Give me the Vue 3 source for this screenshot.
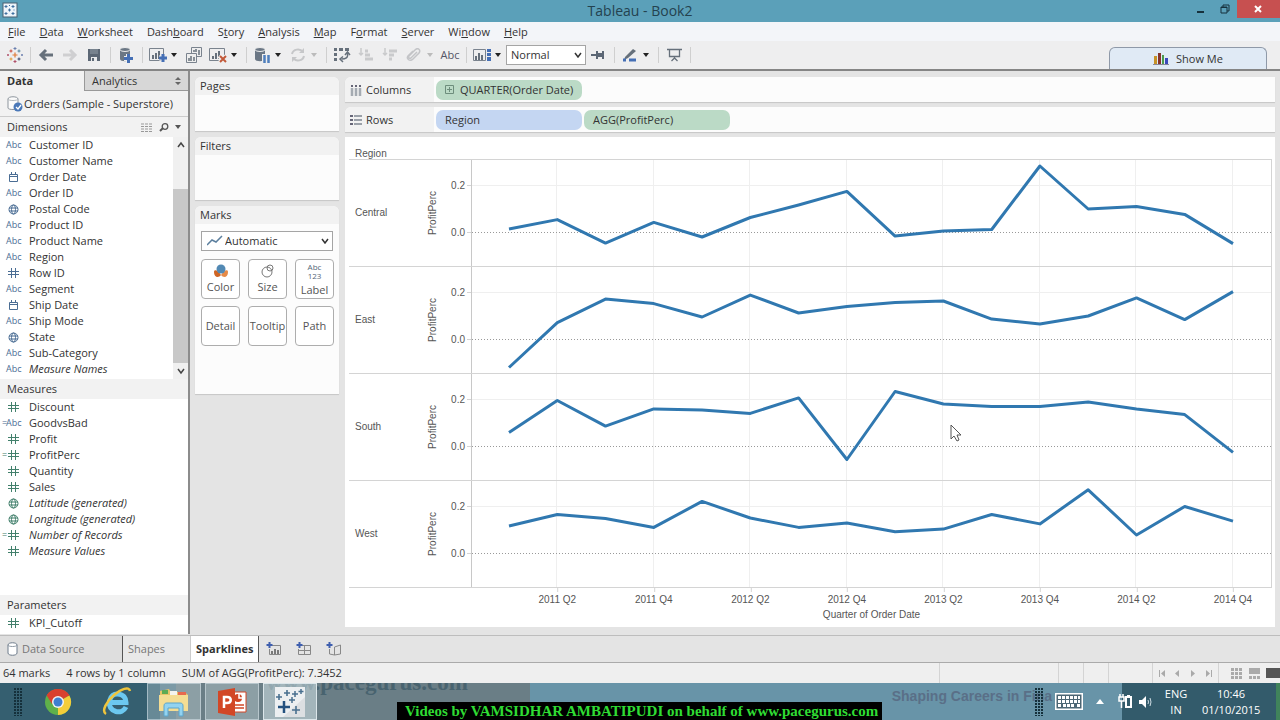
<script setup>
import { ref } from 'vue'

const menus = [
  ['', 'F', 'ile'], ['', 'D', 'ata'], ['', 'W', 'orksheet'], ['Dash', 'b', 'oard'],
  ['S', 't', 'ory'], ['', 'A', 'nalysis'], ['', 'M', 'ap'], ['F', 'o', 'rmat'],
  ['', 'S', 'erver'], ['Wi', 'n', 'dow'], ['', 'H', 'elp']
]

const dimensions = [
  { name: 'Customer ID', type: 'abc' },
  { name: 'Customer Name', type: 'abc' },
  { name: 'Order Date', type: 'date' },
  { name: 'Order ID', type: 'abc' },
  { name: 'Postal Code', type: 'geo' },
  { name: 'Product ID', type: 'abc' },
  { name: 'Product Name', type: 'abc' },
  { name: 'Region', type: 'abc' },
  { name: 'Row ID', type: 'num' },
  { name: 'Segment', type: 'abc' },
  { name: 'Ship Date', type: 'date' },
  { name: 'Ship Mode', type: 'abc' },
  { name: 'State', type: 'geo' },
  { name: 'Sub-Category', type: 'abc' },
  { name: 'Measure Names', type: 'abc', generated: true }
]

const measures = [
  { name: 'Discount', type: 'num' },
  { name: 'GoodvsBad', type: 'abc', calc: true, blue: true },
  { name: 'Profit', type: 'num' },
  { name: 'ProfitPerc', type: 'num', calc: true },
  { name: 'Quantity', type: 'num' },
  { name: 'Sales', type: 'num' },
  { name: 'Latitude (generated)', type: 'geo', generated: true },
  { name: 'Longitude (generated)', type: 'geo', generated: true },
  { name: 'Number of Records', type: 'num', calc: true, generated: true },
  { name: 'Measure Values', type: 'num', generated: true }
]

const parameters = [{ name: 'KPI_Cutoff', type: 'num' }]

const sections = [
  { key: 'dimensions', title: 'Dimensions', fields: dimensions },
  { key: 'measures', title: 'Measures', fields: measures },
  { key: 'parameters', title: 'Parameters', fields: parameters }
]

const regions = [
  { name: 'Central', values: [0.017, 0.057, -0.043, 0.045, -0.017, 0.066, 0.119, 0.177, -0.013, 0.009, 0.015, 0.285, 0.102, 0.113, 0.079, -0.045] },
  { name: 'East', values: [-0.117, 0.074, 0.174, 0.155, 0.098, 0.191, 0.115, 0.143, 0.16, 0.166, 0.089, 0.068, 0.102, 0.179, 0.087, 0.206] },
  { name: 'South', values: [0.062, 0.198, 0.089, 0.162, 0.157, 0.143, 0.209, -0.053, 0.236, 0.183, 0.172, 0.172, 0.191, 0.162, 0.138, -0.023] },
  { name: 'West', values: [0.119, 0.168, 0.151, 0.113, 0.224, 0.153, 0.113, 0.132, 0.095, 0.106, 0.168, 0.128, 0.273, 0.081, 0.202, 0.14] }
]

const PANE_W = 799
const PANE_H = 106
const xAt = i => 37 + i * (724 / 15)
const yAt = v => 73 - v * 235
const line = values => values.map((v, i) => `${xAt(i).toFixed(1)},${yAt(v).toFixed(1)}`).join(' ')
const topOf = v => ({ top: `${(yAt(v) / PANE_H) * 100}%` })
const leftOf = i => ({ left: `${(xAt(i) / PANE_W) * 100}%` })

const quarters = Array.from({ length: 16 }, (_, i) => `${2011 + Math.floor(i / 4)} Q${(i % 4) + 1}`)
const shown = [1, 3, 5, 7, 9, 11, 13, 15]

const fit = ref('Normal')
const mark = ref('Automatic')
</script>

<template>
  <div class="screen">
    <header class="titlebar">
      <svg class="appicon" width="16" height="16" viewBox="0 0 16 16">
        <rect x="1" y="1" width="14" height="14" fill="#eef4fa" stroke="#4a6072" />
        <path d="M4 3v3M2.500 4.500h3M11 3v3M9.500 4.500h3M7.500 6.500v3M6 8h3M4 10v3M2.500 11.500h3M11 10v3M9.500 11.500h3M12 7.500v1M7.500 3v1" stroke="#3f6f9f" fill="none" />
      </svg>
      <h1>Tableau - Book2</h1>
      <div class="winbtns">
        <button aria-label="Minimize"><svg width="10" height="10"><path d="M1 8h7" stroke="#16313c" stroke-width="2" /></svg></button>
        <button aria-label="Restore"><svg width="11" height="10"><path d="M1 3h6v6H1zM3 3V1h6v6H7" fill="none" stroke="#16313c" /><path d="M1 3.500h6" stroke="#16313c" /></svg></button>
        <button class="close" aria-label="Close"><svg width="9" height="8"><path d="M1 1l6 6M7 1L1 7" stroke="#fff" stroke-width="2" /></svg></button>
      </div>
    </header>

    <nav class="menubar">
      <button v-for="m in menus" :key="m.join('')">{{ m[0] }}<u>{{ m[1] }}</u>{{ m[2] }}</button>
    </nav>

    <div class="toolbar">
      <button class="tool logo" aria-label="Start page">
        <svg width="16" height="16" viewBox="0 0 16 16" fill="none">
          <path d="M8 5.500v5M5.500 8h5" stroke="#e07a35" stroke-width="1.200" />
          <path d="M4 2.500v3M2.500 4h3" stroke="#c8493a" /><path d="M12 2.500v3M10.500 4h3" stroke="#59879b" />
          <path d="M4 10.500v3M2.500 12h3" stroke="#e09a35" /><path d="M12 10.500v3M10.500 12h3" stroke="#39476b" />
          <path d="M8 0v3M6.500 1.500h3M15 7v2M14 8h2" stroke="#6a7fae" /><path d="M8 13v3M6.500 14.500h3M1 7v2M0 8h2" stroke="#b0506a" />
        </svg>
      </button>
      <i class="sep"></i>
      <button class="tool" aria-label="Undo"><svg width="16" height="14" fill="none" stroke="#66707b" stroke-width="3"><path d="M3 7h12M8 2L3 7l5 5" /></svg></button>
      <button class="tool" aria-label="Redo"><svg width="16" height="14" fill="none" stroke="#cfcfd1" stroke-width="3"><path d="M1 7h12M8 2l5 5-5 5" /></svg></button>
      <button class="tool" aria-label="Save"><svg width="14" height="14"><path d="M1 1h12v12H1z" fill="#5c6775" /><path d="M3 1h8v5H3z" fill="#77828e" /><path d="M4 9h6v4H4z" fill="#e9eaec" /><path d="M5 10h2v3H5z" fill="#5c6775" /></svg></button>
      <i class="sep"></i>
      <button class="tool" aria-label="New data source"><svg width="16" height="18"><path d="M2 4v9c0 3 10 3 10 0V4z" fill="#6b7785" /><ellipse cx="7" cy="3.500" rx="5" ry="2" fill="#6b7785" stroke="#eee" /><path d="M10.500 8v9M6 12.500h9" stroke="#eee" stroke-width="5" /><path d="M10.500 8v9M6 12.500h9" stroke="#456fb5" stroke-width="3" /></svg></button>
      <i class="sep"></i>
      <button class="tool" aria-label="New worksheet"><svg width="20" height="16"><path d="M1.500 1.500h14v12h-14z" fill="none" stroke="#7a838e" /><path d="M5 12V8M8 12V6M11 12V4" stroke="#66707b" stroke-width="2" /><path d="M15 7v8M11 11h8" stroke="#eee" stroke-width="5" /><path d="M15 7v8M11 11h8" stroke="#456fb5" stroke-width="3" /></svg></button>
      <button class="caret" aria-label="New worksheet options"><svg width="6" height="4"><path d="M0 0h6L3 4z" fill="#222" /></svg></button>
      <button class="tool" aria-label="Duplicate"><svg width="18" height="18" fill="none" stroke="#7a838e"><path d="M6.500 1.500h10v9h-10z" /><path d="M1.500 7.500h10v9h-10z" fill="#eee" /><path d="M9 6V4M11 6V3M14 9V4M4 15v-3M6 15v-5M9 15v-4" stroke="#66707b" stroke-width="1.500" /></svg></button>
      <button class="tool" aria-label="Clear sheet"><svg width="20" height="18"><path d="M1.500 2.500h15v12h-15z" fill="none" stroke="#7a838e" /><path d="M5 13v-3M8 13V7M11 13V5" stroke="#66707b" stroke-width="2" /><path d="M11 10l7 7M18 10l-7 7" stroke="#eee" stroke-width="4" /><path d="M12 10l6 6M18 10l-6 6" stroke="#c2593a" stroke-width="2" /></svg></button>
      <button class="caret" aria-label="Clear options"><svg width="6" height="4"><path d="M0 0h6L3 4z" fill="#222" /></svg></button>
      <i class="sep"></i>
      <button class="tool" aria-label="Pause updates"><svg width="18" height="18"><path d="M2 4v9c0 3 10 3 10 0V4z" fill="#6b7785" /><ellipse cx="7" cy="3.500" rx="5" ry="2" fill="#6b7785" stroke="#eee" /><path d="M9 8h8v10H9z" fill="#eee" /><path d="M11.500 9v8M15.500 9v8" stroke="#4f7fbd" stroke-width="2.500" /></svg></button>
      <button class="caret" aria-label="Pause options"><svg width="6" height="4"><path d="M0 0h6L3 4z" fill="#222" /></svg></button>
      <button class="tool" aria-label="Run update"><svg width="16" height="14" fill="none" stroke="#c6c7c9" stroke-width="2"><path d="M2 6c1-5 8-6 11-2M14 8c-1 5-8 6-11 2" /><path d="M14 0v5H9zM2 14V9h5z" fill="#c6c7c9" stroke="none" /></svg></button>
      <button class="caret" aria-label="Update options"><svg width="6" height="4"><path d="M0 0h6L3 4z" fill="#bbb" /></svg></button>
      <i class="sep"></i>
      <button class="tool" aria-label="Swap rows and columns"><svg width="18" height="16" fill="none" stroke="#66707b"><path d="M1 2.500h3M6 2.500h4M12 2.500h4M2.500 6v3M2.500 11v3" stroke-width="3" /><path d="M14.500 6c1 5-2 6-6 6" stroke-width="1.500" /><path d="M12 8l2.500-3 2.500 3M10 9.500L7 12l3 3" stroke-width="1.500" /></svg></button>
      <button class="tool" aria-label="Sort ascending"><svg width="16" height="14" stroke="#c9cacc" fill="none"><path d="M3 0v7M1 5l2 2 2-2" stroke-width="1.500" /><path d="M7 3h3M7 7h5M7 11h8" stroke-width="3" /></svg></button>
      <button class="tool" aria-label="Sort descending"><svg width="16" height="14" stroke="#c9cacc" fill="none"><path d="M3 0v7M1 5l2 2 2-2" stroke-width="1.500" /><path d="M7 3h8M7 7h5M7 11h3" stroke-width="3" /></svg></button>
      <button class="tool" aria-label="Group"><svg width="16" height="14" stroke="#c3c4c7" fill="none" stroke-width="1.500"><path d="M11 4L5 10c-2 1-3-1-2-2l6-6c3-3 6 0 4 3l-6 6c-3 3-7 0-5-3l5-5" /></svg></button>
      <button class="caret" aria-label="Group options"><svg width="6" height="4"><path d="M0 0h6L3 4z" fill="#bbb" /></svg></button>
      <button class="tool abc" aria-label="Show mark labels">Abc</button>
      <i class="sep"></i>
      <button class="tool" aria-label="Show cards"><svg width="20" height="14"><path d="M1.500 1.500h12v11h-12z" fill="none" stroke="#7a838e" /><path d="M4 12V8M7 12V5M10 12V7" stroke="#66707b" stroke-width="2" /><path d="M15 1h4v3h-4zM15 5h4v3h-4zM15 9h4v4h-4z" fill="#456fb5" /></svg></button>
      <button class="caret" aria-label="Card options"><svg width="6" height="4"><path d="M0 0h6L3 4z" fill="#222" /></svg></button>
      <div class="combo fit">
        <select v-model="fit" aria-label="Fit"><option>Normal</option></select>
        <svg width="8" height="6" fill="none" stroke="#333" stroke-width="1.500"><path d="M1 1l3 4 3-4" /></svg>
      </div>
      <button class="tool" aria-label="Fix axes"><svg width="16" height="12" fill="#5c6775"><path d="M1 5h5v2H1zM6 2h2v8H6zM8 4h4v4H8zM12 2h2v8h-2z" /></svg></button>
      <i class="sep"></i>
      <button class="tool" aria-label="Highlight"><svg width="16" height="14"><path d="M3 9l8-8 3 2-8 7-4 2z" fill="#66707b" /><path d="M7 12h7M1 12h3" stroke="#456fb5" stroke-width="3" /></svg></button>
      <button class="caret" aria-label="Highlight options"><svg width="6" height="4"><path d="M0 0h6L3 4z" fill="#222" /></svg></button>
      <i class="sep"></i>
      <button class="tool" aria-label="Presentation mode"><svg width="15" height="14" fill="none" stroke="#66707b"><path d="M0 1.500h15M2.500 2v6.500h10V2M7.500 9v2M7.500 10l-3 3M7.500 10l3 3" stroke-width="1.300" /></svg></button>
      <i class="sep"></i>
      <button class="showme">
        <svg width="16" height="12"><path d="M1 3h3v8H1z" fill="#c79328" /><path d="M5 0h3v11H5z" fill="#85332c" /><path d="M9 2h2v9H9z" fill="#4b9b4c" /><path d="M12 5h3v6h-3z" fill="#3b49bb" /><path d="M0 11.500h16" stroke="#889" /></svg>
        Show Me
      </button>
    </div>

    <div class="workspace">
      <aside class="side">
        <div class="sidetabs">
          <button class="active">Data</button>
          <button class="off">Analytics
            <svg width="6" height="8" fill="#666"><path d="M0 3h6L3 0zM0 5h6L3 8z" /></svg>
          </button>
        </div>
        <div class="source">
          <svg width="16" height="16" viewBox="0 0 16 16"><path d="M1 3c0-3 10-3 10 0v9c0 2-10 2-10 0z" fill="#fbfbfb" stroke="#8d959d" /><path d="M1 3c0 2 10 2 10 0" fill="none" stroke="#b5babf" /><circle cx="11" cy="11" r="4.500" fill="#4a78b8" /><path d="M9 11l2 2 3-4" fill="none" stroke="#fff" stroke-width="1.300" /></svg>
          Orders (Sample - Superstore)
        </div>
        <section v-for="s in sections" :key="s.key" :class="['fields', s.key]">
          <h2>
            {{ s.title }}
            <span v-if="s.key === 'dimensions'" class="tools">
              <svg width="12" height="9" stroke="#999" stroke-dasharray="3 1"><path d="M0 1h12M0 3.500h12M0 6h12M0 8.500h12" /></svg>
              <svg width="10" height="9" fill="none" stroke="#555"><circle cx="6" cy="3.500" r="2.800" stroke-width="1.300" /><path d="M4 5L1 8" stroke-width="2" /></svg>
              <svg width="6" height="4"><path d="M0 0h6L3 4z" fill="#555" /></svg>
            </span>
          </h2>
          <div class="listwrap">
            <ul>
              <li v-for="f in s.fields" :key="f.name" :class="{ generated: f.generated }">
                <span :class="['ficon', s.key === 'dimensions' || f.blue ? 'blue' : 'green']">
                  <b v-if="f.calc">=</b>
                  <span v-if="f.type === 'abc'">Abc</span>
                  <svg v-else-if="f.type === 'num'" width="14" height="10" fill="none" stroke="currentColor"><path d="M5.500 0v10M9.500 0v10M2 3.500h11M2 6.500h11" /></svg>
                  <svg v-else-if="f.type === 'date'" width="14" height="11" fill="none" stroke="currentColor"><path d="M3.500 2.500h8v7h-8zM3 4.500h9M5.500 0v3M9.500 0v3" /></svg>
                  <svg v-else width="14" height="11" fill="none" stroke="currentColor"><circle cx="7.500" cy="5.500" r="4.500" /><ellipse cx="7.500" cy="5.500" rx="2" ry="4.500" /><path d="M3 4h9M3 7h9" /></svg>
                </span>
                {{ f.name }}
              </li>
            </ul>
            <div v-if="s.key === 'dimensions'" class="scroll">
              <svg width="8" height="16" fill="none" stroke="#444" stroke-width="1.500"><path d="M1 10l3-4 3 4" /></svg>
              <i class="thumb"></i>
              <svg width="8" height="16" fill="none" stroke="#444" stroke-width="1.500"><path d="M1 6l3 4 3-4" /></svg>
            </div>
          </div>
        </section>
      </aside>

      <div class="cards">
        <section class="card pages"><h3>Pages</h3></section>
        <section class="card filters"><h3>Filters</h3></section>
        <section class="card marks">
          <h3>Marks</h3>
          <div class="combo marktype">
            <svg class="lead" width="16" height="12" fill="none" stroke="#5b7f9e" stroke-width="1.500"><path d="M0 10l5-5 4 2 6-6" /></svg>
            <select v-model="mark" aria-label="Mark type"><option>Automatic</option></select>
            <svg width="8" height="6" fill="none" stroke="#333" stroke-width="1.500"><path d="M1 1l3 4 3-4" /></svg>
          </div>
          <div class="markgrid">
            <button><svg width="16" height="14"><path d="M1 8c0-3 4-2 7 3-2 3-7 3-7-3z" fill="#cf6524" /><path d="M15 8c0-3-4-2-7 3 2 3 7 3 7-3z" fill="#e58a48" /><circle cx="8" cy="5" r="4.500" fill="#5289b4" /></svg>Color</button>
            <button><svg width="14" height="14" fill="none" stroke="#777"><circle cx="6" cy="8" r="5" /><circle cx="9" cy="4" r="3" /></svg>Size</button>
            <button class="lbl"><span class="abc123">Abc<br>123</span>Label</button>
            <button>Detail</button>
            <button>Tooltip</button>
            <button>Path</button>
          </div>
        </section>
      </div>

      <main class="main">
        <div class="shelf">
          <div class="shelfname">
            <svg width="12" height="12"><path d="M1 1h2v2H1zM5 1h2v2H5zM9 1h2v2H9z" fill="#667" /><path d="M2 4v8M6 4v8M10 4v8" stroke="#a5abb2" stroke-width="2.500" /></svg>
            Columns
          </div>
          <button class="pill green">
            <svg width="9" height="9" fill="none" stroke="#6d8d7c"><path d="M.5.500h8v8h-8zM2 4.500h5M4.500 2v5" /></svg>
            QUARTER(Order Date)
          </button>
        </div>
        <div class="shelf">
          <div class="shelfname">
            <svg width="12" height="12"><path d="M0 1h3v2H0zM0 5h3v2H0zM0 9h3v2H0z" fill="#667" /><path d="M4 2h8M4 6h8M4 10h8" stroke="#9aa0a8" stroke-width="2" /></svg>
            Rows
          </div>
          <button class="pill blue">Region</button>
          <button class="pill green">AGG(ProfitPerc)</button>
        </div>

        <div class="sheet">
          <div class="colhead">Region</div>
          <div v-for="r in regions" :key="r.name" class="pane">
            <div class="rowlabel">{{ r.name }}</div>
            <div class="axistitle"><span>ProfitPerc</span></div>
            <div class="yaxis">
              <span class="tick" :style="topOf(0.2)">0.2</span>
              <span class="tick" :style="topOf(0)">0.0</span>
            </div>
            <svg class="plot" :viewBox="`0 0 ${PANE_W} ${PANE_H}`" preserveAspectRatio="none" role="img" :aria-label="`${r.name} profit by quarter`">
              <g class="grid">
                <path v-for="i in shown" :key="i" :d="`M${Math.round(xAt(i)) - 0.5} 0V${PANE_H}`" />
                <path :d="`M0 ${yAt(0.2) - 0.5}H${PANE_W}`" />
              </g>
              <path class="zero" :d="`M0 ${yAt(0) - 0.5}H${PANE_W}`" />
              <polyline class="series" :points="line(r.values)" />
            </svg>
          </div>
          <div class="xaxis">
            <div class="xlabels">
              <span v-for="i in shown" :key="i" class="xtick" :style="leftOf(i)">{{ quarters[i] }}</span>
            </div>
            <div class="xtitle">Quarter of Order Date</div>
          </div>
          <svg class="pointer" width="12" height="18"><path d="M1 1v14l3-3 3 5 2-1-2-5h4z" fill="#fff" stroke="#555" /></svg>
        </div>
      </main>
    </div>

    <div class="tabs">
      <button class="tab ds">
        <svg width="11" height="14"><path d="M1 3c0-3 9-3 9 0v8c0 3-9 3-9 0z" fill="#fff" stroke="#6f7d8c" /><path d="M1 3c0 2 9 2 9 0" fill="none" stroke="#8f9aa5" /></svg>
        Data Source
      </button>
      <button class="tab shapes">Shapes</button>
      <button class="tab current">Sparklines</button>
      <button class="add" aria-label="New worksheet"><svg width="16" height="14" fill="none"><path d="M5 3.500h9.500v9H3.500V7" stroke="#888" /><path d="M6 12V9M9 12V7M12 12V8" stroke="#555" stroke-width="1.500" /><path d="M3.500 0v6M.500 3h6" stroke="#3f5fae" stroke-width="2" /></svg></button>
      <button class="add" aria-label="New dashboard"><svg width="16" height="14" fill="none"><path d="M5 3.500h9.500v9H2.500V7M3 8.500h11M8.500 4v8" stroke="#888" /><path d="M3.500 0v6M.500 3h6" stroke="#3f5fae" stroke-width="2" /></svg></button>
      <button class="add" aria-label="New story"><svg width="16" height="14" fill="none"><path d="M8.500 5l6-2v9l-6 1-5-1V7M8.500 5v8" stroke="#888" /><path d="M3.500 0v6M.500 3h6" stroke="#3f5fae" stroke-width="2" /></svg></button>
    </div>

    <div class="status">
      <span>64 marks</span><span>4 rows by 1 column</span><span>SUM of AGG(ProfitPerc): 7.3452</span>
      <div class="cells">
        <i class="c1"></i><i class="c2"></i><i class="c2"></i><i class="c3"></i>
        <div class="nav">
          <button aria-label="First"><svg width="7" height="7" fill="#aaa"><path d="M0 0h1v7H0zM6 0v7L2 3.500z" /></svg></button>
          <button aria-label="Previous"><svg width="7" height="7" fill="#aaa"><path d="M5 0v7L1 3.500z" /></svg></button>
          <button aria-label="Next"><svg width="7" height="7" fill="#aaa"><path d="M1 0v7l4-3.500z" /></svg></button>
          <button aria-label="Last"><svg width="7" height="7" fill="#aaa"><path d="M1 0v7l4-3.500zM6 0h1v7H6z" /></svg></button>
        </div>
        <div class="views">
          <button aria-label="Sheet sorter"><svg width="11" height="11" fill="#aaa"><path d="M0 0h3v3H0zM4 0h3v3H4zM8 0h3v3H8zM0 4h3v3H0zM4 4h3v3H4zM8 4h3v3H8zM0 8h3v3H0zM4 8h3v3H4zM8 8h3v3H8z" /></svg></button>
          <button aria-label="Filmstrip"><svg width="11" height="11" fill="#aaa"><path d="M0 0h11v6H0zM0 8h3v3H0zM4 8h3v3H4zM8 8h3v3H8z" /></svg></button>
          <button class="dark" aria-label="Tabs view"></button>
        </div>
      </div>
    </div>

    <footer class="taskbar">
      <div class="back">
        <span class="site">www.pacegurus.com</span>
        <span class="slogan">Shaping Careers in Fina</span>
      </div>
      <i class="dots first"></i>
      <button class="app chrome" aria-label="Chrome">
        <svg width="28" height="28" viewBox="0 0 28 28"><circle cx="14" cy="14" r="13" fill="#5fb04a" /><path d="M14 14L2.700 7.500A13 13 0 0 1 25.300 7.500z" fill="#d9402f" /><path d="M14 14l11.300-6.500A13 13 0 0 1 14 27z" fill="#f3cd3a" /><path d="M14 8h11.500l-.2-.5A13 13 0 0 0 2.700 7.500L8 16z" fill="#d9402f" /><circle cx="14" cy="14" r="6" fill="#f2f2f2" /><circle cx="14" cy="14" r="4.500" fill="#3f7fd0" /></svg>
      </button>
      <button class="app ie" aria-label="Internet Explorer">
        <svg width="30" height="30" viewBox="0 0 30 30" fill="none"><path d="M24 20c-2 4-6 5.500-10 4.500C9 23 6.500 19 7.500 14 8.500 9 12 6.500 16 7c5.500.5 8 4 8 8.500H9" stroke="#6cc8f0" stroke-width="5" /><path d="M4 27c-5-3 1-13 8-19S27-1 28 4" stroke="#f0c53c" stroke-width="2.500" /></svg>
      </button>
      <button class="app open explorer" aria-label="File Explorer">
        <svg width="32" height="30" viewBox="0 0 32 30"><path d="M2 4l9-2 2 3h14l3 3v16H2z" fill="#e6c469" /><path d="M4 3h6v4H4z" fill="#5cab55" /><path d="M12 4h7v4h-7z" fill="#f4f4ee" /><path d="M20 5h8v4h-8z" fill="#e7694f" /><path d="M1 8h29v16H1z" fill="#f4dd93" /><path d="M6 29V19c0-2 1-3 3-3h13c2 0 3 1 3 3v10h-4v-8H10v8z" fill="#93d3f0" stroke="#5ba5cc" /></svg>
      </button>
      <button class="app open ppt" aria-label="PowerPoint">
        <svg width="30" height="28" viewBox="0 0 30 28"><path d="M15 4h14v20H15z" fill="#fff" stroke="#d24726" /><circle cx="21" cy="10" r="4" fill="#d24726" /><path d="M22 6v4h4" stroke="#fff" fill="none" stroke-width="1.500" /><path d="M18 17h9M18 20h9" stroke="#d24726" stroke-width="1.500" /><path d="M1 3l17-3v28L1 25z" fill="#d24726" /><path d="M7 20V9h3c5 0 5 6 0 6H8" fill="none" stroke="#fff" stroke-width="2.500" /></svg>
      </button>
      <button class="app open tableau" aria-label="Tableau">
        <svg width="30" height="30" viewBox="0 0 30 30" fill="none"><path d="M0 0h30v30H0z" fill="#eceff1" /><path d="M30 10v20H8z" fill="#dcdfe2" /><path d="M9 14v12M3 20h12" stroke="#24517f" stroke-width="2.500" /><path d="M4 7v6M1 10h6M12 3v6M9 6h6M21 19v8M17 23h8" stroke="#49708f" stroke-width="1.600" /><path d="M17 10v6M14 13h6M20 4v6M17 7h6M26 2v5M23.500 4.500h5" stroke="#49708f" stroke-width="1.500" /></svg>
      </button>
      <div class="tray">
        <i class="dots"></i>
        <svg class="kbd" width="28" height="17"><path d="M.5.500h27v16H.5z" fill="#4c6674" stroke="#fff" stroke-width="2" /><path d="M3 4.500h22M3 8.500h22M3 12.500h3M8 12.500h12M22 12.500h3" stroke="#fff" stroke-width="3" stroke-dasharray="3 1" /></svg>
        <svg class="up" width="8" height="5"><path d="M0 5h8L4 0z" fill="#fff" /></svg>
        <svg class="power" width="14" height="15" fill="none" stroke="#fff"><path d="M1 3h5v4H1zM2 0v3M5 0v3M3.500 7v7" stroke-width="1.500" /><path d="M8 3h5v10H8zM9 2h3" stroke-width="2" /></svg>
        <svg class="vol" width="15" height="14"><path d="M1 5h3l4-4v12L4 9H1z" fill="#fff" /><path d="M10 5q1 2 0 4M12 3q2 4 0 8" fill="none" stroke="#cfdde3" /></svg>
        <span class="lang">ENG<br>IN</span>
        <span class="clock">10:46<br>01/10/2015</span>
      </div>
      <div class="caption">Videos by VAMSIDHAR AMBATIPUDI on behalf of www.pacegurus.com</div>
    </footer>
  </div>
</template>

<style>
body { margin: 0; }
</style>

<style scoped>
* { box-sizing: border-box; }
.screen { display: flex; flex-direction: column; min-height: 100vh; background: #e4e4e4; color: #333; font: 11px/16px "Open Sans", "Noto Sans", sans-serif; overflow: hidden; }
button { font: inherit; color: inherit; background: none; border: 0; padding: 0; margin: 0; display: flex; align-items: center; white-space: nowrap; }
svg { display: block; flex: none; }
h1, h2, h3, ul { margin: 0; padding: 0; font: inherit; list-style: none; }

.titlebar { height: 22px; background: #5ba0b9; display: flex; align-items: center; justify-content: center; position: relative; }
.titlebar h1 { font-size: 14px; color: #24424f; }
.appicon { position: absolute; left: 2px; top: 2px; }
.winbtns { position: absolute; right: 0; top: 0; height: 18px; display: flex; }
.winbtns button { width: 24px; justify-content: center; }
.winbtns .close { width: 43px; background: #c75050; }

.menubar { height: 19px; background: #f3f5f9; display: flex; gap: 14px; padding: 0 8px; }
.menubar u { text-underline-offset: 1px; }

.toolbar { height: 30px; background: #eeeeef; border-bottom: 2px solid #858585; display: flex; align-items: center; padding-left: 4px; }
.tool { width: 24px; height: 26px; justify-content: center; }
.tool.logo { width: 22px; }
.tool.abc { color: #556; }
.caret { width: 12px; height: 26px; padding-left: 1px; }
.sep { width: 8px; height: 16px; background: linear-gradient(#cfcfcf, #cfcfcf) center / 1px 100% no-repeat; }
.combo { position: relative; display: flex; align-items: center; }
.combo select { appearance: none; width: 100%; height: 20px; background: #fff; border: 1px solid #a5a5a5; border-radius: 0; font: inherit; color: #333; padding: 0 4px; }
.combo svg { position: absolute; right: 4px; pointer-events: none; }
.combo .lead { left: 6px; right: auto; }
.fit { width: 80px; }
.showme { margin: 0 13px 0 auto; align-self: flex-end; width: 158px; height: 22px; justify-content: center; gap: 7px; background: #e0eaf5; border: 1px solid #8f99a8; border-bottom: 0; border-radius: 6px 6px 0 0; }

.workspace { flex: 1; display: flex; border-bottom: 1px solid #bdbdbd; }
.side { width: 190px; background: #fff; border-right: 2px solid #8c8c8c; margin-bottom: 1px; display: flex; flex-direction: column; }
.sidetabs { display: flex; height: 20px; }
.sidetabs .active { width: 84px; padding-left: 7px; background: #f2f2f2; font-weight: 700; }
.sidetabs .off { flex: 1; padding: 0 7px; justify-content: space-between; background: #d7d7d7; border-left: 1px solid #999; border-bottom: 1px solid #999; }
.source { height: 26px; background: #f2f2f2; border-bottom: 1px solid #ccc; display: flex; align-items: center; gap: 1px; padding-left: 7px; white-space: nowrap; }
.fields h2 { height: 20px; background: #f2f2f2; padding: 2px 7px; display: flex; justify-content: space-between; align-items: center; }
.tools { display: flex; align-items: center; gap: 6px; }
.measures { flex: 1; }
.measures .listwrap { padding-bottom: 4px; }
.parameters .listwrap { padding-bottom: 3px; }
.listwrap { display: flex; }
.listwrap ul { flex: 1; }
.dimensions ul { padding-bottom: 2px; }
li { height: 16px; display: flex; align-items: center; white-space: nowrap; }
.generated { font-style: italic; }
.ficon { position: relative; width: 29px; padding-left: 6px; display: flex; align-items: center; font-size: 9px; font-style: normal; line-height: 12px; }
.ficon.blue { color: #4a6d94; }
.ficon.green { color: #42806c; }
.ficon b { position: absolute; left: 2px; font-weight: 400; }
.scroll { width: 15px; background: #f0f0f0; display: flex; flex-direction: column; align-items: center; }
.thumb { width: 100%; flex: 1; margin-top: 36px; background: #c8c8c8; }

.cards { width: 155px; padding: 6px 6px 0 5px; display: flex; flex-direction: column; gap: 6px; }
.card { background: #fcfcfc; border-radius: 6px 6px 0 0; box-shadow: 0 1px 1px #c6c6c6; }
.card h3 { height: 18px; background: #f2f2f2; border-radius: 6px 6px 0 0; padding: 1px 5px; }
.pages { height: 54px; }
.filters { height: 63px; }
.marks { height: 188px; }
.marktype { margin: 7px 6px 8px; }
.marktype select { padding-left: 23px; }
.markgrid { display: grid; grid-template-columns: repeat(3, 1fr); gap: 7px 8px; padding: 0 5px 0 6px; }
.markgrid button { height: 40px; flex-direction: column; justify-content: center; gap: 1px; border: 1px solid #adadad; border-radius: 4px; background: #fff; color: #555; }
.markgrid .lbl { gap: 3px; line-height: 14px; }
.abc123 { font-size: 8px; line-height: 9px; color: #567; }

.main { flex: 1; min-width: 0; display: flex; flex-direction: column; padding: 6px 5px 8px 0; }
.shelf { height: 25px; margin-bottom: 5px; background: #fcfcfc; box-shadow: 0 1px 1px #c6c6c6; display: flex; align-items: center; gap: 2px; border-radius: 6px 0 0 0; }
.shelfname { width: 89px; height: 100%; background: #f2f2f2; display: flex; align-items: center; gap: 4px; padding-left: 5px; border-radius: 6px 0 0 0; }
.pill { width: 146px; height: 20px; border-radius: 7px; padding: 0 9px; gap: 6px; }
.pill.green { background: #bbdac6; }
.pill.blue { background: #c4d6f2; }

.sheet { position: relative; flex: 1; display: flex; flex-direction: column; background: #fff; padding: 0 3px 0 4px; color: #555; font: 10px/14px "Liberation Sans", Arial, sans-serif; }
.colhead { height: 23px; padding: 10px 6px 0; border-bottom: 1px solid #d4d4d4; line-height: 13px; }
.pane { flex: 1; min-height: 106px; display: flex; border-bottom: 1px solid #d4d4d4; border-right: 1px solid #d4d4d4; }
.rowlabel { width: 77px; padding-left: 6px; display: flex; align-items: center; }
.axistitle { width: 14px; display: flex; align-items: center; }
.axistitle span { writing-mode: vertical-rl; rotate: 180deg; }
.yaxis { width: 32px; position: relative; border-right: 1px solid #c8c8c8; }
.tick { position: absolute; right: 6px; translate: 0 -50%; }
.tick::after { content: ""; position: absolute; right: -6px; top: 6px; width: 4px; height: 1px; background: #d4d4d4; }
.plot { flex: 1; min-width: 0; height: 106px; }
.plot path, .plot polyline { vector-effect: non-scaling-stroke; fill: none; }
.grid path { stroke: #efefef; }
.zero { stroke: #999; stroke-dasharray: 1 2; }
.series { stroke: #3078b0; stroke-width: 3px; stroke-linejoin: round; }
.xaxis { height: 39px; padding: 0 1px 0 123px; }
.xlabels { position: relative; height: 19px; }
.xtick { position: absolute; top: 5px; translate: -50% 0; white-space: nowrap; }
.xtick::before { content: ""; position: absolute; left: 50%; top: -5px; width: 1px; height: 4px; background: #d4d4d4; }
.xtitle { text-align: center; line-height: 16px; }
.pointer { position: absolute; left: 65%; top: 287px; }

.tabs { height: 27px; background: #e4e4e4; border-bottom: 1px solid #aaa; display: flex; }
.tab { border-right: 1px solid #555; color: #777; }
.tab.ds { width: 123px; padding-left: 7px; gap: 4px; background: #dedede; }
.tab.shapes { width: 68px; padding-left: 5px; background: #e9e9e9; border-color: #ccc; }
.tab.current { width: 68px; padding-left: 5px; background: #fff; color: #333; font-weight: 700; }
.add { width: 30px; justify-content: center; }

.status { height: 20px; background: #efefef; display: flex; align-items: center; gap: 16px; padding-left: 3px; }
.cells { margin-left: auto; display: flex; height: 100%; }
.cells > * { border-left: 1px solid #d4d4d4; }
.c1 { width: 119px; }
.c2 { width: 25px; }
.c3 { width: 44px; }
.nav { width: 66px; display: flex; align-items: center; justify-content: space-between; padding: 0 6px; }
.views { width: 62px; display: flex; align-items: center; justify-content: space-between; padding-left: 12px; }
.dark { width: 14px; height: 10px; background: #555; }

.taskbar { height: 37px; position: relative; display: flex; align-items: stretch; background: linear-gradient(90deg, #355f70 160px, #547787 160px, #547787 176px, #6a7e86 176px, #6a7e86 530px, #6894a8 530px); }
.back { position: absolute; inset: 0; overflow: hidden; }
.site { position: absolute; left: 266px; top: -12px; font: bold 23px/24px "Liberation Serif", serif; color: #48636f; }
.slogan { position: absolute; right: 228px; top: 4px; font: bold 14px/18px "Liberation Sans", sans-serif; color: #5a6f87; }
.dots { width: 8px; height: 28px; align-self: center; background: radial-gradient(circle at 1px 1px, #15303b 1px, transparent 1px) 0 0 / 3px 3px; }
.dots.first { margin-left: 14px; }
.app { position: relative; width: 54px; justify-content: center; }
.chrome { margin-left: 9px; }
.ie { margin: 0 3px 0 5px; }
.open { margin-right: 4px; background: rgba(220, 235, 240, 0.3); border: 1px solid rgba(225, 238, 243, 0.5); }
.tableau { background: rgba(220, 235, 240, 0.5); border-color: #dbe6ea; }
.tray { position: relative; margin-left: auto; width: 245px; display: flex; align-items: center; color: #fff; background: linear-gradient(90deg, transparent 87px, #335b6b 87px, #335b6b 241px, #40835b 241px); text-align: center; }
.kbd { margin-left: 12px; }
.up { margin-left: 13px; }
.power { margin-left: 14px; }
.vol { margin-left: 6px; }
.lang { margin-left: 11px; width: 24px; }
.clock { margin-left: 14px; width: 58px; white-space: nowrap; }
.caption { position: absolute; left: 397px; bottom: 0; width: 485px; height: 18px; padding-left: 8px; background: #000; color: #2fdc33; font: bold 15px/19px "Liberation Serif", serif; white-space: nowrap; }
</style>
